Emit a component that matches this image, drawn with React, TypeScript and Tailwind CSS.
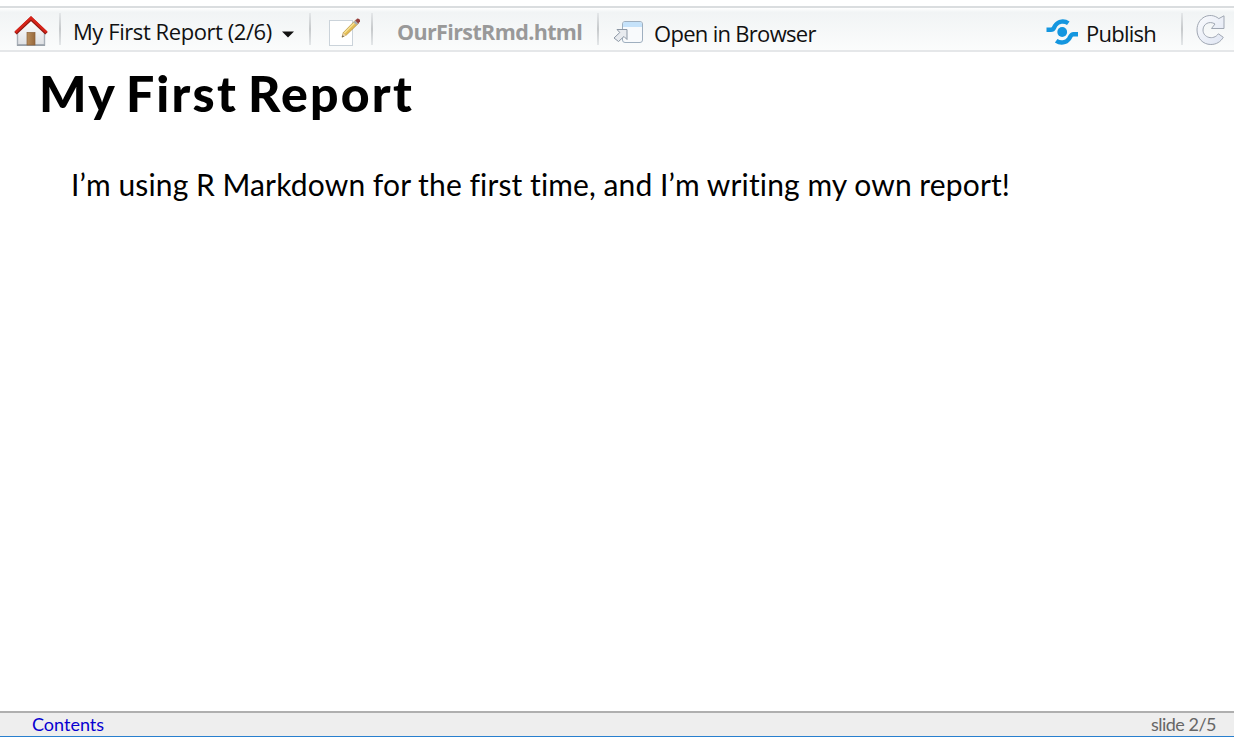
import React from "react";

const Separator = () => (
  <div className="mt-[13px] h-8 w-0.5 shrink-0 bg-linear-to-b from-[#e4e7e9] via-[#c6c9cb] to-[#e4e7e9]" />
);

const HomeIcon = () => (
  <svg width="34" height="32" viewBox="0 0 34 32" fill="none">
    <defs>
      <linearGradient id="wall" x1="0" y1="0" x2="0" y2="1">
        <stop offset="0" stopColor="#fff" />
        <stop offset="1" stopColor="#dfe1e4" />
      </linearGradient>
      <linearGradient id="door" x1="0" y1="0" x2="1" y2="0">
        <stop offset="0" stopColor="#b78d5b" />
        <stop offset="1" stopColor="#98683c" />
      </linearGradient>
    </defs>
    <path d="M3.5 16 L17 4 L30.5 16 V30 H3.5Z" fill="url(#wall)" />
    <path d="M3.5 16V30H30.5V16" stroke="#a9b0b8" strokeWidth="1.4" />
    <path d="M3 30.2H31" stroke="#9aa2aa" strokeWidth="1.6" />
    <rect x="13" y="17.5" width="8" height="12.5" fill="url(#door)" stroke="#8b6038" strokeWidth=".7" />
    <path d="M1.5 18.2 L17 3.6 L32.5 18.2" stroke="#8f1710" strokeWidth="3.6" />
    <path d="M1.5 17.4 L17 2.8 L32.5 17.4" stroke="#d7241a" strokeWidth="2.6" />
  </svg>
);

const EditIcon = () => (
  <svg width="33" height="29" viewBox="0 0 33 29" fill="none">
    <rect x="1.5" y="3.5" width="23" height="25" fill="#fff" stroke="#cbd3da" />
    <path d="M14 20.2 L15.3 15.6 L27.5 3.2 L30.6 6.2 L18.4 18Z" fill="#e4bd55" stroke="#ac8736" strokeWidth=".7" />
    <path d="M16.3 16 L28 4.3" stroke="#f7e397" strokeWidth="1.3" />
    <path d="M14 20.2 L15.3 16 L18 18.5Z" fill="#ead3ad" />
    <path d="M14 20.2 L14.7 18.2 L16 19.5Z" fill="#514c48" />
    <path d="M25.5 5.3 L27.5 3.3 L30.4 6.2 L28.3 8.1Z" fill="#a8adb1" />
    <path d="M27.3 3.5 L29.2 1.6 Q32.4 1.8 32 4.6 L30.2 6.4Z" fill="#963e3b" />
  </svg>
);

const BrowserIcon = () => (
  <svg width="31" height="24" viewBox="0 0 31 24" fill="none">
    <rect x="9.5" y="1.5" width="20" height="21" rx="2.5" fill="#f8fafc" stroke="#9fafbf" />
    <path d="M10 7V4Q10 2 12 2H27Q29 2 29 4V7Z" fill="#c5e2fa" />
    <path d="M4 9.5H14V19.5L11 16.5L5.5 21.5L1 18L6.8 12.5Z" fill="#e8ebef" stroke="#8c97a5" strokeLinejoin="round" />
  </svg>
);

const PublishIcon = () => (
  <svg width="33" height="26" viewBox="0 0 33 26" fill="none">
    <circle cx="16.2" cy="13" r="4.9" fill="#1496df" />
    <path d="M0.5 10.8H5C8 10.8 7.8 8.3 9.6 6C12.4 2.2 18.1 1.3 22.3 4.3" stroke="#1496df" strokeWidth="4.4" />
    <path d="M32 15.2H27.5C24.5 15.2 24.7 17.7 22.9 20C20.1 23.8 14.4 24.7 10.2 21.7" stroke="#1496df" strokeWidth="4.4" />
  </svg>
);

const RefreshIcon = () => (
  <svg width="30" height="32" viewBox="0 0 30 32" fill="none">
    <defs>
      <linearGradient id="refresh" x1="0" y1="0" x2="1" y2="1">
        <stop offset="0" stopColor="#fafbfd" />
        <stop offset="1" stopColor="#dfe5f3" />
      </linearGradient>
    </defs>
    <path
      d="M22.8 4.6L28 1.8V14.5H15.5L19 10C13.4 6.4 7 10 7 16C7 23.8 17.5 26.6 22.4 19.8L27.3 23.3C24.6 27.8 20.4 30.5 14.8 30.5C6.9 30.5 1 24.2 1 16C1 3.4 14-2.6 22.8 4.6Z"
      fill="url(#refresh)"
      stroke="#a0a7b3"
      strokeLinejoin="round"
    />
  </svg>
);

export default function App() {
  return (
    <div className="flex h-[737px] w-[1234px] flex-col overflow-hidden bg-white pt-1.5 whitespace-nowrap">
      <header className="flex h-[46px] shrink-0 items-start border-t-2 border-b-2 border-t-[#dadddf] border-b-[#e5e7e9] bg-linear-to-b from-white via-[#f1f4f5] via-10% to-[#fbfcfc] font-['Open_Sans',sans-serif] text-[22px] leading-[30px] text-[#111]">
        <div className="flex w-[59px] shrink-0 pt-[7px] pl-3.5"><HomeIcon /></div>
        <div className="-mt-2 flex"><Separator /></div>
        <button className="flex w-[248px] shrink-0 items-start pt-2 pl-3">
          <span className="w-[209px] shrink-0 text-left tracking-[-0.43px]">My First Report (2/6)</span>
          <svg className="mt-[15px]" width="12" height="7"><path d="M0 .5H12L6 6.5Z" fill="#111" /></svg>
        </button>
        <div className="-mt-2 flex"><Separator /></div>
        <div className="flex w-[60px] shrink-0 pt-[9px] pl-[17px]"><EditIcon /></div>
        <div className="-mt-2 flex"><Separator /></div>
        <div className="w-[224px] shrink-0 pt-[9px] pl-6 text-[21.5px] font-bold tracking-[-0.63px] text-[#999]">OurFirstRmd.html</div>
        <div className="-mt-2 flex"><Separator /></div>
        <button className="flex shrink-0 items-start pt-2.5 pl-3.5">
          <span className="mt-0.5 w-[41px]"><BrowserIcon /></span>
          <span className="tracking-[-0.7px]">Open in Browser</span>
        </button>
        <button className="ml-auto flex w-[135px] shrink-0 items-start pt-2.5">
          <span className="mt-px w-10 shrink-0"><PublishIcon /></span>
          <span className="tracking-[-0.75px]">Publish</span>
        </button>
        <div className="-mt-2 flex"><Separator /></div>
        <div className="flex w-[51px] shrink-0 pt-1.5 pl-[13px]"><RefreshIcon /></div>
      </header>
      <main className="flex-1 font-['Lato',sans-serif] text-black">
        <h1 className="pt-3 pl-[39px] text-[50px] leading-[58px] font-black tracking-[2.2px] [word-spacing:-4px]">My First Report</h1>
        <p className="pt-[42px] pl-[71px] text-[30px] leading-[40px] tracking-[0.15px] [word-spacing:-0.3px]">I’m using R Markdown for the first time, and I’m writing my own report!</p>
      </main>
      <footer className="flex h-[26px] shrink-0 justify-between border-t-2 border-b border-t-[#afafaf] border-b-[#287fce] bg-[#eee] pr-[18px] pl-8 font-['Lato',sans-serif] text-[18px] leading-[22px]">
        <a className="text-[#0800d0]">Contents</a>
        <span className="tracking-[-0.5px] text-[#666]">slide 2/5</span>
      </footer>
    </div>
  );
}
